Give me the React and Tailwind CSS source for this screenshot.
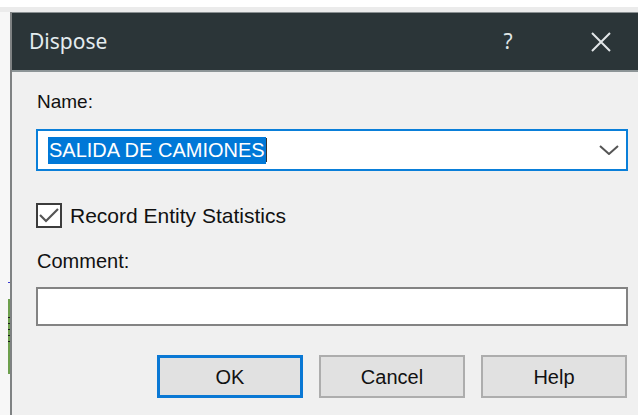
export default function App() {
  const body = { fontFamily: '"Liberation Sans", Arial, sans-serif' };
  const title = { fontFamily: '"Noto Sans", "Open Sans", sans-serif' };

  return (
    <div className="w-[638px] h-[415px] overflow-hidden bg-white flex flex-col" style={body}>
      {/* strip above the window */}
      <div className="h-[7px] shrink-0 bg-white" />
      <div className="h-[5px] shrink-0 bg-[#ebebeb]" />

      <div className="flex flex-1 min-h-0">
        {/* edge of the canvas behind the dialog */}
        <div className="w-[8px] shrink-0 bg-[#f7f7f7]" />
        <div className="w-[2px] shrink-0 bg-[#f7f7f7] flex flex-col">
          <div className="h-[270px] shrink-0" />
          <div className="h-[1px] bg-[#3a3ad0]" />
          <div className="h-[16px]" />
          <div className="h-[75px] bg-[#6ea04e] flex flex-col">
            <div className="h-[18px]" />
            <div className="h-[1px] bg-[#1a1a1a]" />
            <div className="h-[5px]" />
            <div className="h-[1px] bg-[#1a1a1a]" />
            <div className="h-[5px]" />
            <div className="h-[1px] bg-[#1a1a1a]" />
            <div className="h-[5px]" />
            <div className="h-[1px] bg-[#1a1a1a]" />
            <div className="h-[5px]" />
            <div className="h-[1px] bg-[#1a1a1a]" />
          </div>
        </div>

        {/* dialog window */}
        <div className="flex-1 flex flex-col border-l-2 border-[#7f8283]">
          {/* title bar */}
          <div className="h-[60px] shrink-0 bg-[#2b3538] border-t border-[#8a9092] border-b-2 border-b-[#8d9597] flex items-center">
            <div className="pl-[17px] pt-[1px] text-[21px] text-[#e4ecef] flex-1" style={title}>
              Dispose
            </div>
            <div className="w-[20px] text-center text-[21px] text-[#dfe4e6] mr-[73px]" style={title}>
              ?
            </div>
            <div className="w-[20px] h-[20px] mr-[27px] mt-[1px]">
              <svg viewBox="0 0 20 20" width="20" height="20">
                <path d="M1 1 L19 19 M19 1 L1 19" stroke="#e2e6e8" strokeWidth="2" fill="none" />
              </svg>
            </div>
          </div>

          {/* dialog body */}
          <div className="flex-1 bg-[#f0f0f0] pl-[24px] pr-[10px] pt-[18px] flex flex-col">
            <div className="text-[19px] leading-[23px] text-[#111] pl-[1px]">Name:</div>

            <div className="mt-[16px] h-[42px] border-2 border-[#0a7fd9] bg-white flex items-center pl-[10px] pr-[7px]">
              <div className="flex-1 flex items-center">
                <span className="bg-[#0078d7] text-white text-[20px] leading-[27px] px-[1px]">
                  SALIDA DE CAMIONES
                </span>
                <span className="w-[1px] h-[24px] bg-[#333]" />
              </div>
              <svg viewBox="0 0 20 10" width="20" height="10">
                <path d="M1 1 L10 9 L19 1" stroke="#555" strokeWidth="2" fill="none" />
              </svg>
            </div>

            <div className="mt-[32px] flex items-center h-[25px]">
              <div className="w-[26px] h-[25px] border-2 border-[#3c3c3c] bg-white flex items-center justify-center">
                <svg viewBox="0 0 22 21" width="22" height="21">
                  <path d="M2 10 L8 16 L20 4" stroke="#555" strokeWidth="2.2" fill="none" />
                </svg>
              </div>
              <span className="ml-[8px] text-[21px] leading-[25px] text-[#111]">Record Entity Statistics</span>
            </div>

            <div className="mt-[22px] text-[20px] leading-[23px] text-[#111] pl-[1px]">Comment:</div>

            <div className="mt-[14px] h-[39px] border-2 border-[#838383] bg-white" />

            <div className="mt-[29px] flex justify-end gap-[16px] pr-[1px]">
              <button className="w-[146px] h-[43px] border-[3px] border-[#0a78d4] bg-[#e1e1e1] text-[20px] text-[#111]">
                OK
              </button>
              <button className="w-[146px] h-[43px] border-2 border-[#adadad] bg-[#e1e1e1] text-[20px] text-[#111]">
                Cancel
              </button>
              <button className="w-[146px] h-[43px] border-2 border-[#adadad] bg-[#e1e1e1] text-[20px] text-[#111]">
                Help
              </button>
            </div>
          </div>
        </div>
      </div>
    </div>
  );
}
